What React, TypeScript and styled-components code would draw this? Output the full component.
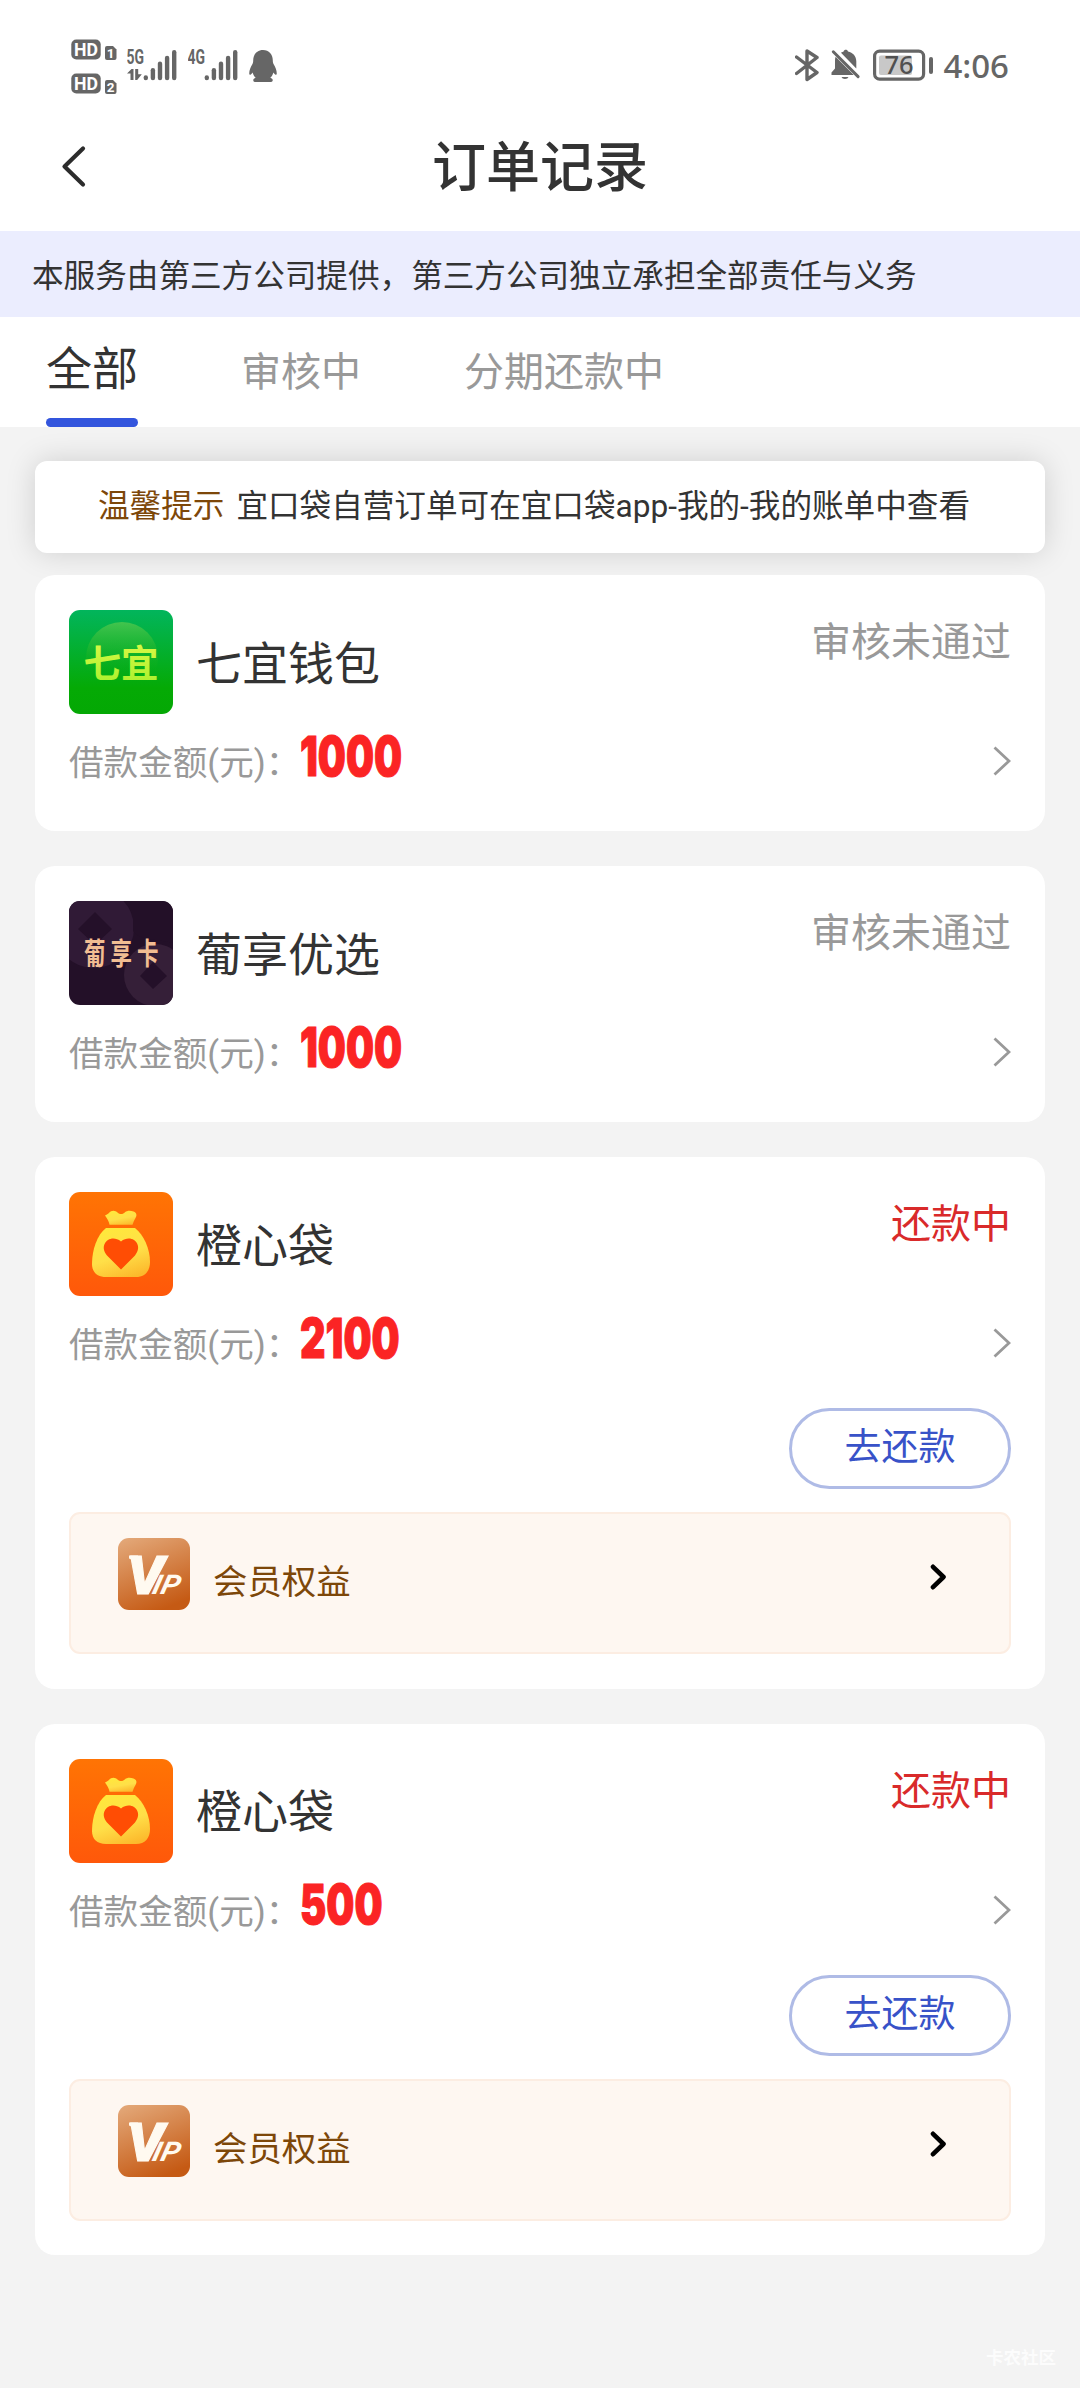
import React from 'react';
import styled, { createGlobalStyle } from 'styled-components';

const GlobalStyle = createGlobalStyle`
  *, *::before, *::after { box-sizing: border-box; }
  html, body { margin: 0; padding: 0; background: #f3f3f3; }
  body { font-family: Roboto, "Noto Sans CJK SC", sans-serif; color: #333; }
  svg { display: block; flex: none; }
`;

const Page = styled.div`
  width: 1080px;
  height: 2388px;
  display: flex;
  flex-direction: column;
  background: #f3f3f3;
  overflow: hidden;
`;

const StatusBar = styled.div`
  height: 130px;
  padding: 0 71px;
  display: flex;
  justify-content: space-between;
  background: #fff;
`;

const StatusGroup = styled.div<{ $gap: number }>`
  display: flex;
  align-items: flex-start;
  gap: ${(p) => p.$gap}px;
  padding-top: 38px;
`;

const BatteryGroup = styled.div`
  display: flex;
  align-items: flex-start;
  gap: 12px;
  padding-top: 48px;
`;

const Clock = styled.span`
  font: 500 33px/36px "Noto Sans", sans-serif;
  color: #666;
  margin-left: -2px;
`;

const TitleBar = styled.header`
  height: 101px;
  padding: 0 60px 27px;
  display: grid;
  grid-template-columns: 60px 1fr 60px;
  align-items: center;
  background: #fff;
`;

const Title = styled.h1`
  margin: 0;
  padding-top: 4px;
  text-align: center;
  font-size: 54px;
  line-height: 70px;
  font-weight: 500;
  color: #333;
`;

const Notice = styled.div`
  height: 86px;
  padding-left: 32px;
  background: #ebedfe;
  font-size: 31.6px;
  line-height: 91px;
  white-space: nowrap;
`;

const Tabs = styled.nav`
  height: 110px;
  padding: 0 46px;
  display: flex;
  gap: 103px;
  background: #fff;
`;

const Tab = styled.span<{ $active?: boolean }>`
  height: 110px;
  display: flex;
  flex-direction: column;
  justify-content: space-between;
  font-size: ${(p) => (p.$active ? 46 : 40)}px;
  line-height: ${(p) => (p.$active ? 105 : 111)}px;
  color: ${(p) => (p.$active ? '#333' : '#999')};
  white-space: nowrap;
`;

const TabLabel = styled.span`
  height: 101px;
`;

const TabLine = styled.i`
  height: 9px;
  border-radius: 5px;
  background: #3355dd;
`;

const Content = styled.main`
  padding: 34px 35px 0;
  display: flex;
  flex-direction: column;
  flex: 1;
`;

const Tip = styled.div`
  height: 92px;
  padding-left: 63px;
  border-radius: 12px;
  display: flex;
  gap: 12px;
  background: #fff;
  box-shadow: 0 0 30px rgba(0, 0, 0, 0.15);
  font-size: 31.6px;
  line-height: 91px;
  white-space: nowrap;
`;

const TipLead = styled.b`
  font-weight: 400;
  color: #7d4709;
`;

const Orders = styled.section`
  margin-top: 22px;
  display: flex;
  flex-direction: column;
  gap: 35px;
`;

const Card = styled.article<{ $tall: boolean }>`
  padding: 35px 34px ${(p) => (p.$tall ? 34.5 : 23)}px;
  display: flex;
  flex-direction: column;
  border-radius: 20px;
  background: #fff;
`;

const CardHead = styled.div`
  height: 104px;
  display: flex;
  align-items: center;
`;

const Name = styled.h2`
  margin: 0 0 0 23px;
  padding-top: 3px;
  flex: 1;
  font-size: 46px;
  line-height: 60px;
  font-weight: 400;
`;

const Status = styled.span<{ $active: boolean }>`
  align-self: flex-start;
  font-size: 40px;
  line-height: 66px;
  color: ${(p) => (p.$active ? '#d92a2a' : '#999')};
`;

const AmountRow = styled.div`
  height: 94px;
  display: flex;
  align-items: center;
`;

const AmountLabel = styled.span`
  padding-top: 4px;
  font-size: 34.6px;
  line-height: 60px;
  color: #999;
  white-space: nowrap;
`;

const Amount = styled.strong`
  flex: 1;
  padding-bottom: 11px;
  font: 900 54.5px/78px Inter, sans-serif;
  color: #fb2424;
  -webkit-text-stroke: 1px #fb2424;
  transform: scaleX(0.725);
  transform-origin: 0 50%;
`;

const Actions = styled.div`
  margin: 18px 0 23px;
  display: flex;
  justify-content: flex-end;
`;

const RepayButton = styled.button`
  width: 222px;
  height: 81px;
  padding: 0 0 1px;
  border: 3px solid #afbbe6;
  border-radius: 41px;
  background: #fff;
  color: #3852c8;
  font: 400 37px/60px Roboto, "Noto Sans CJK SC", sans-serif;
`;

const Vip = styled.div`
  height: 142px;
  padding: 24px 62px 0 47px;
  display: flex;
  align-items: flex-start;
  border: 2px solid #fcede2;
  border-radius: 11px;
  background: #fef7f1;
`;

const VipLabel = styled.span`
  flex: 1;
  margin-left: 23px;
  font-size: 34.4px;
  line-height: 88px;
  color: #7d4709;
`;

const ArrowBox = styled.span`
  padding-top: 26px;
`;

const Watermark = styled.footer`
  margin: auto -11px 0 0;
  padding-bottom: 20px;
  align-self: flex-end;
  font-size: 17.5px;
  line-height: 20px;
  font-weight: 700;
  color: #fcfcfc;
`;

const Ink = '#666';

const HdIcon = () => (
  <svg width="46" height="58" viewBox="0 0 46 58">
    {[0, 34].map((y, i) => (
      <g key={y} transform={`translate(0 ${y})`}>
        <rect x="0.3" y="1.5" width="29.4" height="20" rx="5" fill={Ink} />
        <text x="15" y="18" textAnchor="middle" fontFamily="Roboto" fontWeight="700" fontSize="18.5" fill="#fff" textLength="24" lengthAdjust="spacingAndGlyphs">HD</text>
        <path d="M36 8h6l3.500 3.500V20a2 2 0 0 1-2 2H36a2 2 0 0 1-2-2V10a2 2 0 0 1 2-2Z" fill={Ink} />
        <text x="39.700" y="20" textAnchor="middle" fontFamily="Roboto" fontWeight="700" fontSize="13.500" fill="#fff">{i + 1}</text>
      </g>
    ))}
  </svg>
);

const SignalIcon = ({ label, data }: { label: string; data?: boolean }) => (
  <svg width="51" height="44" viewBox="0 0 51 44">
    <text x="-0.5" y="25.500" fontFamily="Roboto" fontWeight="700" fontSize="19.500" fill={Ink} textLength="17.500" lengthAdjust="spacingAndGlyphs">{label}</text>
    {data && <path d="M0 35.500 4.500 31h2V42H3.500v-6.500ZM8.200 31h3v5.200h3.600L10.200 42h-2Z" fill={Ink} />}
    {[39.5, 32.200, 25.700, 20, 14.200].map((top, i) => (
      <path key={top} d={`M${18.8 + i * 7.1} ${top}V40`} stroke={Ink} strokeWidth="4.400" strokeLinecap="round" />
    ))}
  </svg>
);

const PenguinIcon = () => (
  <svg width="28" height="46" viewBox="0 0 28 46">
    <path d="M14 12C8 12 4.200 16.500 4.200 22.500c0 1.500-.2 2.500-1 4C1.500 29.500 0 33 .3 36c.2 1.500 1.800.6 3.300-1.600.6 2.300 1.600 3.900 3.100 5.400-1.600.5-2.600 1.300-2.400 2.700.1 1.300 1.200 1.500 3 1.500h13.400c1.800 0 2.900-.2 3-1.500.2-1.400-.8-2.200-2.400-2.700 1.500-1.500 2.500-3.100 3.100-5.400 1.500 2.200 3.100 3.100 3.300 1.600.3-3-1.200-6.500-2.900-9.500-.8-1.500-1-2.500-1-4C23.800 16.500 20 12 14 12Z" fill={Ink} />
  </svg>
);

const BluetoothIcon = () => (
  <svg width="24" height="34" viewBox="0 0 24 34">
    <path d="M1.500 9 22 24.500 12 31.500V3L22 9.500 1.500 25.500" fill="none" stroke={Ink} strokeWidth="3.400" strokeLinecap="round" strokeLinejoin="round" />
  </svg>
);

const MutedBellIcon = () => (
  <svg width="30" height="34" viewBox="0 0 30 34">
    <path d="M10 4.800C11 4 12.200 3.700 12.600 3.500c.4-2.400 4-2.400 4.400 0 4.800 1 8.300 4.700 8.300 9.800v7.200ZM4.600 8.800 22.800 27H0.500v-2.500L4 20.500v-8c0-1.400.2-2.700.6-3.700ZM10.500 29h7a3.600 2.600 0 0 1-7 0Z" fill={Ink} />
    <path d="m2.300 3.800 24.800 24.800" stroke={Ink} strokeWidth="3" strokeLinecap="round" />
  </svg>
);

const BatteryIcon = () => (
  <svg width="60" height="34" viewBox="0 0 60 34">
    <rect x="1.600" y="3.100" width="49" height="28" rx="5" fill="#fff" stroke={Ink} strokeWidth="3.200" />
    <rect x="6" y="7.500" width="33" height="19.500" rx="2" fill="#c8c8c8" />
    <rect x="56" y="9" width="4" height="17" rx="2" fill={Ink} />
    <text x="26" y="26.300" textAnchor="middle" fontFamily="Noto Sans" fontWeight="500" fontSize="25.500" fill="#505050">76</text>
  </svg>
);

const BackIcon = () => (
  <svg width="28" height="44" viewBox="0 0 28 44">
    <path d="M23 3.500 4.500 21.500 23 39.500" fill="none" stroke="#2c2c2c" strokeWidth="4.200" strokeLinecap="round" strokeLinejoin="round" />
  </svg>
);

const ChevronIcon = () => (
  <svg width="18" height="30" viewBox="0 0 18 30">
    <path d="M1.500 1.500 16 15 1.500 28.500" fill="none" stroke="#999" strokeWidth="2.800" />
  </svg>
);

const BoldChevronIcon = () => (
  <svg width="17" height="26" viewBox="0 0 17 26">
    <path d="M3 2.800 13.500 13 3 23.200" fill="none" stroke="#000" strokeWidth="4.600" strokeLinecap="round" strokeLinejoin="round" />
  </svg>
);

const QiyiLogo = () => (
  <svg width="104" height="104" viewBox="0 0 104 104">
    <defs>
      <linearGradient id="qy-bg" x1="0" y1="0" x2="0" y2="1">
        <stop offset="0" stopColor="#02b55c" />
        <stop offset="0.750" stopColor="#05aa05" />
        <stop offset="1" stopColor="#04a804" />
      </linearGradient>
      <linearGradient id="qy-disc" x1="0" y1="0" x2="0" y2="1">
        <stop offset="0" stopColor="#5fcb4e" stopOpacity="0.700" />
        <stop offset="0.700" stopColor="#20b010" stopOpacity="0" />
      </linearGradient>
      <linearGradient id="qy-ink" x1="0" y1="0" x2="0" y2="1">
        <stop offset="0" stopColor="#e6fa4a" />
        <stop offset="1" stopColor="#a5f02c" />
      </linearGradient>
    </defs>
    <rect width="104" height="104" rx="11" fill="url(#qy-bg)" />
    <circle cx="53" cy="48" r="36" fill="url(#qy-disc)" />
    <text x="52" y="66.5" textAnchor="middle" fontFamily="Noto Sans CJK SC" fontWeight="700" fontSize="37.5" fill="url(#qy-ink)">七宜</text>
  </svg>
);

const PuxiangLogo = () => (
  <svg width="104" height="104" viewBox="0 0 104 104">
    <defs>
      <clipPath id="px-clip"><rect width="104" height="104" rx="11" /></clipPath>
    </defs>
    <g clipPath="url(#px-clip)">
      <rect width="104" height="104" fill="#231028" />
      <circle cx="25" cy="27" r="40" fill="#301a36" />
      <path d="m26 11 17 17-17 16L9 28Z" fill="#241029" />
      <circle cx="86" cy="74" r="31" fill="#351f38" />
      <path d="m84 61 14 14-14 13-13-13Z" fill="#241029" />
      <path d="M104 0v42C88 38 72 40 64 30V0Z" fill="#231028" />
    </g>
    <g fill="#f2bd92" fontFamily="Noto Sans CJK SC" fontWeight="700">
      <text transform="translate(15 63) scale(0.86 1.18)" fontSize="25" letterSpacing="5.8">葡享卡</text>
    </g>
  </svg>
);

const ChengxinLogo = () => (
  <svg width="104" height="104" viewBox="0 0 104 104">
    <defs>
      <linearGradient id="cx-bg" x1="0" y1="0" x2="0" y2="1">
        <stop offset="0" stopColor="#ff7404" />
        <stop offset="1" stopColor="#ff580a" />
      </linearGradient>
      <linearGradient id="cx-bag" x1="0.300" y1="0" x2="0.700" y2="1">
        <stop offset="0" stopColor="#ffe83c" />
        <stop offset="0.550" stopColor="#ffdf48" />
        <stop offset="1" stopColor="#fcb92c" />
      </linearGradient>
    </defs>
    <rect width="104" height="104" rx="11" fill="url(#cx-bg)" />
    <path d="M36 23.500C39 22.500 40 20.500 42 19.300c2.500-1.300 4.800-.4 6.500 1.200 2.500 2.200 5.500 2 7.500-.2 2-1.700 5-2 8.500-.8 3.500 1.500 3.500 4 2 6.500-1.500 2.500-2 4-3 6.800H40.500c-.5-3.500-2-5.500-4.500-9.300Z" fill="url(#cx-bag)" />
    <path d="M37 36h29c9 7 15 21 15 34 0 9-5 15-14 15H37c-9 0-14-5-14-13 0-14 5-29 14-36Z" fill="url(#cx-bag)" />
    <path d="M52 77.500 38 63.500C29 53 41 41 52 49.500 63 41 75 53 66 63.500Z" fill="#ff4d04" />
  </svg>
);

const VipLogo = () => (
  <svg width="72" height="72" viewBox="0 0 72 72">
    <defs>
      <linearGradient id="vip-bg" x1="0.200" y1="0" x2="0.600" y2="1">
        <stop offset="0" stopColor="#e2a575" />
        <stop offset="1" stopColor="#c55a14" />
      </linearGradient>
    </defs>
    <rect width="72" height="72" rx="11" fill="url(#vip-bg)" />
    <path d="M11 17.500h9v4.500h-5.500L11 20.500Z" fill="#fffaf0" />
    <g fill="#fffaf0" fontFamily="Roboto" fontStyle="italic">
      <text x="9" y="55.500" fontWeight="900" fontSize="53" textLength="37" lengthAdjust="spacingAndGlyphs" stroke="#fffaf0" strokeWidth="1">V</text>
      <text transform="translate(33 55.500) skewX(-14)" fontWeight="700" fontSize="27" textLength="27" lengthAdjust="spacingAndGlyphs">IP</text>
    </g>
  </svg>
);

interface Order {
  name: string;
  status: string;
  amount: string;
  repaying: boolean;
  Logo: () => React.ReactElement;
}

const orders: Order[] = [
  { name: '七宜钱包', status: '审核未通过', amount: '1000', repaying: false, Logo: QiyiLogo },
  { name: '葡享优选', status: '审核未通过', amount: '1000', repaying: false, Logo: PuxiangLogo },
  { name: '橙心袋', status: '还款中', amount: '2100', repaying: true, Logo: ChengxinLogo },
  { name: '橙心袋', status: '还款中', amount: '500', repaying: true, Logo: ChengxinLogo },
];

const OrderCard = ({ name, status, amount, repaying, Logo }: Order) => (
  <Card $tall={repaying}>
    <CardHead>
      <Logo />
      <Name>{name}</Name>
      <Status $active={repaying}>{status}</Status>
    </CardHead>
    <AmountRow>
      <AmountLabel>借款金额(元)：</AmountLabel>
      <Amount>{amount}</Amount>
      <ChevronIcon />
    </AmountRow>
    {repaying && (
      <>
        <Actions>
          <RepayButton>去还款</RepayButton>
        </Actions>
        <Vip>
          <VipLogo />
          <VipLabel>会员权益</VipLabel>
          <ArrowBox>
            <BoldChevronIcon />
          </ArrowBox>
        </Vip>
      </>
    )}
  </Card>
);

export default function App() {
  return (
    <Page>
      <GlobalStyle />
      <StatusBar>
        <StatusGroup $gap={10}>
          <HdIcon />
          <SignalIcon label="5G" data />
          <SignalIcon label="4G" />
          <PenguinIcon />
        </StatusGroup>
        <BatteryGroup>
          <BluetoothIcon />
          <MutedBellIcon />
          <BatteryIcon />
          <Clock>4:06</Clock>
        </BatteryGroup>
      </StatusBar>
      <TitleBar>
        <BackIcon />
        <Title>订单记录</Title>
      </TitleBar>
      <Notice>本服务由第三方公司提供，第三方公司独立承担全部责任与义务</Notice>
      <Tabs>
        <Tab $active>
          <TabLabel>全部</TabLabel>
          <TabLine />
        </Tab>
        <Tab>审核中</Tab>
        <Tab>分期还款中</Tab>
      </Tabs>
      <Content>
        <Tip>
          <TipLead>温馨提示</TipLead>
          <span>宜口袋自营订单可在宜口袋app-我的-我的账单中查看</span>
        </Tip>
        <Orders>
          {orders.map((order, i) => (
            <OrderCard key={i} {...order} />
          ))}
        </Orders>
        <Watermark>卡农社区</Watermark>
      </Content>
    </Page>
  );
}
